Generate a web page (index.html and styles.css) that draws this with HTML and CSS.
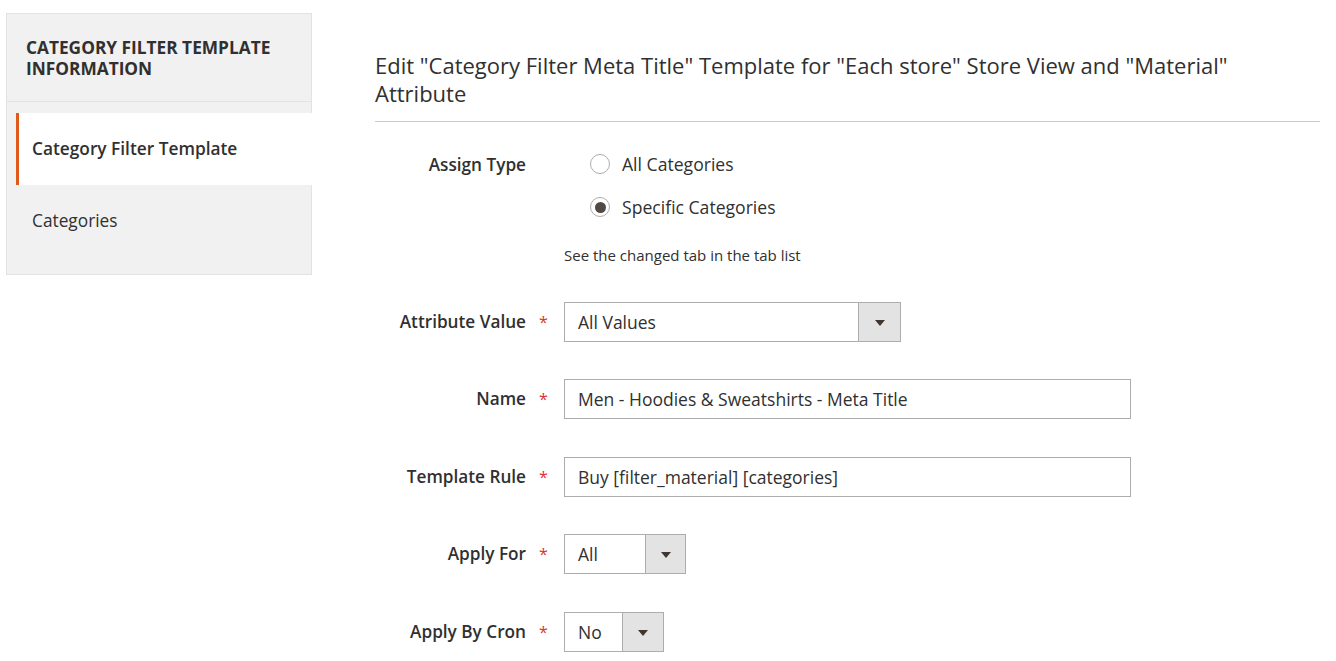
FILE: index.html
```html
<!DOCTYPE html>
<html>
<head>
<meta charset="utf-8">
<link rel="stylesheet" href="styles.css">
</head>
<body>
<div class="page">
  <aside class="sidebar">
    <div class="side-title">Category Filter Template Information</div>
    <ul class="side-nav">
      <li class="side-item active">Category Filter Template</li>
      <li class="side-item">Categories</li>
    </ul>
  </aside>
  <main class="main">
    <h1 class="title">Edit "Category Filter Meta Title" Template for "Each store" Store View and "Material" Attribute</h1>
    <div class="form">
      <div class="row row-radio">
        <div class="label">Assign Type</div>
        <div class="star"></div>
        <div class="control">
          <div class="radios">
            <div class="radio-opt"><span class="radio"></span><span>All Categories</span></div>
            <div class="radio-opt"><span class="radio checked"></span><span>Specific Categories</span></div>
          </div>
          <div class="note">See the changed tab in the tab list</div>
        </div>
      </div>
      <div class="row">
        <div class="label">Attribute Value</div>
        <div class="star">*</div>
        <div class="control">
          <div class="select w-attr"><span class="sel-val">All Values</span><span class="sel-btn w42"><span class="tri"></span></span></div>
        </div>
      </div>
      <div class="row">
        <div class="label">Name</div>
        <div class="star">*</div>
        <div class="control">
          <div class="input">Men - Hoodies &amp; Sweatshirts - Meta Title</div>
        </div>
      </div>
      <div class="row">
        <div class="label">Template Rule</div>
        <div class="star">*</div>
        <div class="control">
          <div class="input">Buy [filter_material] [categories]</div>
        </div>
      </div>
      <div class="row">
        <div class="label">Apply For</div>
        <div class="star">*</div>
        <div class="control">
          <div class="select w-for"><span class="sel-val">All</span><span class="sel-btn w40"><span class="tri"></span></span></div>
        </div>
      </div>
      <div class="row">
        <div class="label">Apply By Cron</div>
        <div class="star">*</div>
        <div class="control">
          <div class="select w-cron"><span class="sel-val">No</span><span class="sel-btn w41"><span class="tri"></span></span></div>
        </div>
      </div>
    </div>
  </main>
</div>
</body>
</html>
```
FILE: styles.css
```css
* { box-sizing: border-box; }
html, body { margin: 0; padding: 0; background: #fff; }
body {
  font-family: "Open Sans", "Noto Sans", sans-serif;
  color: #303030;
  overflow: hidden;
}
.page {
  display: flex;
  align-items: flex-start;
  padding: 13px 0 0 6px;
}
.sidebar {
  width: 306px;
  flex: none;
}
.side-title {
  background: #f1f1f1;
  border: 1px solid #e3e3e3;
  height: 89px;
  padding: 23px 10px 0 19px;
  font-size: 17.3px;
  line-height: 21px;
  font-weight: 700;
  text-transform: uppercase;
  color: #303030;
}
.side-nav {
  list-style: none;
  margin: 0;
  padding: 11px 0 17px 0;
  background: #f1f1f1;
  border: 1px solid #e3e3e3;
  border-top: 0;
}
.side-item {
  margin-left: 9px;
  border-left: 3px solid transparent;
  padding: 24px 13px;
  font-size: 17.3px;
  line-height: 24px;
  color: #303030;
}
.side-item.active {
  background: #fff;
  border-left-color: #e0581a;
  font-weight: 600;
  margin-right: -1px;
}
.main {
  margin-left: 63px;
  width: 945px;
  flex: none;
}
.title {
  margin: 38px 0 0 0;
  padding-bottom: 14px;
  border-bottom: 1px solid #cccccc;
  font-size: 22px;
  line-height: 28px;
  font-weight: 400;
  color: #303030;
}
.form {
  display: flex;
  flex-direction: column;
  gap: 37.5px;
  padding-top: 20.5px;
}
.row {
  display: grid;
  grid-template-columns: 151px 38px 1fr;
  align-items: center;
  min-height: 40px;
}
.row-radio { align-items: start; }
.label {
  text-align: right;
  font-size: 17.2px;
  font-weight: 600;
  line-height: 24px;
  color: #303030;
}
.row-radio .label { padding-top: 10px; }
.star {
  color: #e0332b;
  font-size: 16px;
  padding-left: 13px;
  line-height: 24px;
}
.radios {
  padding-left: 26px;
}
.radio-opt {
  display: flex;
  align-items: center;
  gap: 12px;
  height: 43px;
  font-size: 17.6px;
}
.radio {
  width: 20px;
  height: 20px;
  border: 1px solid #adadad;
  border-radius: 50%;
  background: #fff;
  display: inline-flex;
  align-items: center;
  justify-content: center;
}
.radio.checked::after {
  content: "";
  width: 11px;
  height: 11px;
  border-radius: 50%;
  background: #514943;
}
.note {
  margin-top: 17.5px;
  font-size: 15px;
  line-height: 18px;
  color: #303030;
}
.input, .select {
  height: 40px;
  border: 1px solid #adadad;
  background: #fff;
  font-size: 17.5px;
  color: #303030;
  display: flex;
  align-items: center;
}
.input {
  width: 567px;
  padding: 0 13px;
}
.select .sel-val {
  flex: 1;
  padding-left: 13px;
}
.sel-btn {
  align-self: stretch;
  background: #e3e3e3;
  border-left: 1px solid #adadad;
  display: flex;
  align-items: center;
  justify-content: center;
}
.w42 { width: 42px; }
.w40 { width: 40px; }
.w41 { width: 41px; }
.w-attr { width: 337px; }
.w-for { width: 122px; }
.w-cron { width: 100px; }
.tri {
  width: 0;
  height: 0;
  border-left: 5px solid transparent;
  border-right: 5px solid transparent;
  border-top: 6px solid #41362f;
  margin-top: 2px;
}
```
